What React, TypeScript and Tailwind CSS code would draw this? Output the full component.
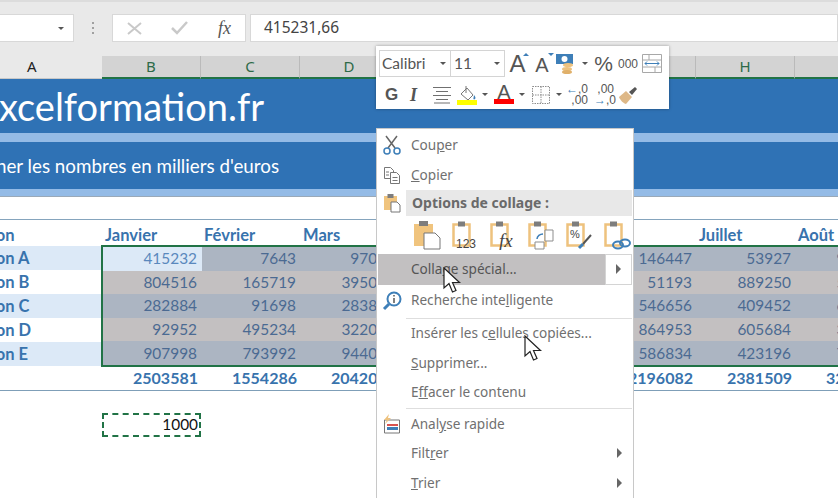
import type { ReactNode } from "react";

const COLS = ["B", "C", "D", "E", "F", "G", "H", "I"];

// the values under the context menu (E, F) are not visible, left blank
const ROWS = [
  { label: "Région A", values: ["415232", "7643", "97012", "", "", "146447", "53927", "915230"] },
  { label: "Région B", values: ["804516", "165719", "395044", "", "", "51193", "889250", "512044"] },
  { label: "Région C", values: ["282884", "91698", "283871", "", "", "546656", "409452", "603118"] },
  { label: "Région D", values: ["92952", "495234", "322066", "", "", "864953", "605684", "320771"] },
  { label: "Région E", values: ["907998", "793992", "944012", "", "", "586834", "423196", "781206"] },
];
const TOTALS = ["2503581", "1554286", "2042005", "", "", "2196082", "2381509", "3241669"];
const HEADERS = ["Janvier", "Février", "Mars", "", "", "", "Juillet", "Août"];

function Caret({ className = "" }: { className?: string }) {
  return <span className={`inline-block w-0 h-0 border-x-[3px] border-x-transparent border-t-[3px] border-t-[#555] ${className}`} />;
}

function Arrow() {
  return <span className="w-0 h-0 border-y-[5px] border-y-transparent border-l-[5px] border-l-[#666]" />;
}

function Clip({ children }: { children?: ReactNode }) {
  return (
    <svg width="28" height="30" viewBox="0 0 28 30" className="shrink-0">
      <path d="M2.500 4.500h16v21h-16z" fill="none" stroke="#eec27e" strokeWidth="2.500" />
      <path d="M7 1.500h7v5H7z" fill="#7d7d7d" />
      {children}
    </svg>
  );
}

function Mouse({ className }: { className: string }) {
  return (
    <svg width="20" height="27" viewBox="0 0 20 27" className={`absolute ${className}`}>
      <path d="M1 1v20l5-4.500 3.500 8.500 3.500-1.500-3.500-8h7z" fill="#fff" stroke="#222" strokeWidth="1.200" />
    </svg>
  );
}

function Item({ icon, children, arrow, h = "h-[29.5px]" }: { icon?: ReactNode; children: ReactNode; arrow?: boolean; h?: string }) {
  return (
    <div className={`flex items-center ${h}`}>
      <div className="w-[29px] shrink-0 flex justify-center items-center">{icon}</div>
      <div className="pl-[5px] flex-1">{children}</div>
      {arrow && <div className="w-[27px] flex justify-center"><Arrow /></div>}
    </div>
  );
}

function Sep() {
  return <div className="h-px bg-[#dedede] ml-[29px] mr-[1px] mt-[1px]" />;
}

function MiniToolbar() {
  return (
    <div className="absolute left-[376px] top-[46px] w-[293px] h-[63px] bg-white shadow-[0_0_3px_rgba(0,0,0,0.35)] px-[3px] pt-[4px] font-['Liberation_Sans',sans-serif] text-[#555]">
      <div className="flex items-center h-[27px]">
        <div className="w-[72px] h-[27px] border border-[#d4d4d4] flex items-center justify-between px-[2px] text-[15.500px] font-['Lato',sans-serif]">
          Calibri<Caret className="mr-[2px]" />
        </div>
        <div className="w-[54px] h-[27px] border border-[#d4d4d4] border-l-0 flex items-center justify-between pl-[3px] pr-[2px] text-[15.500px] font-['Lato',sans-serif]">
          11<Caret className="mr-[2px]" />
        </div>
        <div className="relative w-[25px] text-[24px] leading-none text-center">
          A<span className="absolute right-[1px] top-[1px] w-0 h-0 border-x-[3px] border-x-transparent border-b-[3px] border-b-[#3e7fb8]" />
        </div>
        <div className="relative w-[24px] text-[20px] leading-none text-center pt-[3px]">
          A<span className="absolute right-[0px] top-[1px] w-0 h-0 border-x-[3px] border-x-transparent border-t-[3px] border-t-[#3e7fb8]" />
        </div>
        <svg width="21" height="21" viewBox="0 0 21 21" className="ml-[1px]">
          <rect x="1" y="1" width="17" height="10" fill="#3e7fb8" />
          <circle cx="9.500" cy="6" r="3" fill="#fff" />
          <ellipse cx="13" cy="12" rx="5" ry="2" fill="#eec27e" />
          <ellipse cx="12" cy="16" rx="5" ry="2" fill="#eec27e" />
          <ellipse cx="12" cy="19" rx="5" ry="2" fill="#e0b06a" />
        </svg>
        <Caret className="ml-[6px]" />
        <div className="w-[21px] ml-[5px] text-[21px] leading-none text-center">%</div>
        <div className="w-[20px] ml-[4px] text-[12px] text-center">000</div>
        <svg width="20" height="19" viewBox="0 0 20 19" className="ml-[4px]">
          <path d="M.5.5h19v18H.5zM.5 6h19M.5 13h19M7 .5V6M13 13v5.500" fill="none" stroke="#a8a8a8" />
          <path d="M3 9.500h14M3 9.500l2-2M3 9.500l2 2M17 9.500l-2-2M17 9.500l-2 2" fill="none" stroke="#3e7fb8" />
        </svg>
      </div>
      <div className="flex items-center h-[29px] mt-[3px]">
        <div className="w-[14px] ml-[6px] text-[17px] font-bold leading-none">G</div>
        <div className="w-[12px] ml-[11px] text-[18px] font-bold italic leading-none font-['Liberation_Serif',serif]">I</div>
        <svg width="18" height="18" viewBox="0 0 18 18" className="ml-[11px]">
          <path d="M0 1.500h18M3 5.500h12M0 9.500h18M3 13.500h12M1 17h16" stroke="#707070" />
        </svg>
        <svg width="20" height="20" viewBox="0 0 20 20" className="ml-[6px]">
          <path d="M4 9l6-6 6 7-5 5z" fill="#fff" stroke="#777" />
          <path d="M9 1v7" stroke="#777" />
          <path d="M17 10c1.500 2 2 3 1 4s-2 0-1.500-1z" fill="#3e7fb8" />
          <rect x="0" y="15" width="20" height="5" fill="#ffff00" />
        </svg>
        <Caret className="ml-[5px]" />
        <div className="w-[20px] ml-[6px] flex flex-col items-center">
          <span className="text-[20px] leading-[15px] h-[14px]">A</span>
          <span className="w-[20px] h-[5px] bg-[#ff0000]" />
        </div>
        <Caret className="ml-[5px]" />
        <svg width="18" height="18" viewBox="0 0 18 18" className="ml-[7px]">
          <path d="M.5.5h17v17H.5zM9 .5v17M.5 9h17" fill="none" stroke="#8d8d8d" strokeDasharray="1.500 1" />
        </svg>
        <Caret className="ml-[6px]" />
        <div className="w-[22px] ml-[4px] text-[12px] leading-[11px] text-right">
          <div><span className="text-[#3e7fb8] font-bold">←</span>,0</div>
          <div>,00</div>
        </div>
        <div className="w-[20px] ml-[6px] text-[12px] leading-[11px] text-right">
          <div>,00</div>
          <div><span className="text-[#3e7fb8] font-bold">→</span>,0</div>
        </div>
        <svg width="20" height="20" viewBox="0 0 20 20" className="ml-[4px]">
          <path d="M1 12l7-6 6 6-6 7c-2 0-6-4-7-7z" fill="#deb887" />
          <path d="M11 7l6-5 2 2-5 6z" fill="#555" />
        </svg>
      </div>
    </div>
  );
}

function ContextMenu() {
  return (
    <div className="absolute left-[376px] top-[128px] w-[258px] h-[372px] bg-white border border-[#c8c8c8] pt-[1px] font-['Noto_Sans',sans-serif] text-[13.600px] text-[#707070]">
      <Item
        h="h-[30px]"
        icon={
          <svg width="18" height="20" viewBox="0 0 18 20">
            <path d="M3 1l9 12M14 1L5 13" stroke="#666" strokeWidth="1.500" />
            <circle cx="4" cy="16" r="3" fill="none" stroke="#3e7fb8" strokeWidth="1.500" />
            <circle cx="14" cy="16" r="3" fill="none" stroke="#3e7fb8" strokeWidth="1.500" />
          </svg>
        }
      >
        Cou<u>p</u>er
      </Item>
      <Item
        icon={
          <svg width="18" height="18" viewBox="0 0 18 18">
            <path d="M1.500 1.500h6l3 3v8h-9z" fill="#fff" stroke="#777" />
            <path d="M7.500 6.500h6l3 3v8h-9z" fill="#fff" stroke="#777" />
            <path d="M9.500 11.500h5M9.500 14.500h5M3 6h3M3 9h3" stroke="#777" />
          </svg>
        }
      >
        <u>C</u>opier
      </Item>
      <div className="flex h-[26px]">
        <div className="w-[29px] flex justify-center items-center">
          <svg width="18" height="20" viewBox="0 0 18 20">
            <path d="M1 3h13v14H1z" fill="#f0c47e" />
            <path d="M4.500 1h6v4h-6z" fill="#7d7d7d" />
            <path d="M8 9h6l3 3v7H8z" fill="#fff" stroke="#777" />
          </svg>
        </div>
        <div className="flex-1 bg-[#e8e8e8] mr-[1px] flex items-center pl-[6px] font-bold text-[#6a6a6a] text-[14px]">Options de collage :</div>
      </div>
      <div className="flex items-center h-[38px] pl-[36px] gap-[10px]">
        <svg width="28" height="30" viewBox="0 0 28 30" className="shrink-0">
          <path d="M1 4h19v22H1z" fill="#f0c47e" />
          <path d="M6 1h9v5H6z" fill="#7d7d7d" />
          <path d="M11 13h11l5 5v11H11z" fill="#fff" stroke="#777" />
        </svg>
        <Clip><text x="5" y="28" fontSize="12" fontFamily="Liberation Sans" fill="#444">123</text></Clip>
        <Clip><text x="10" y="27" fontSize="19" fontStyle="italic" fontFamily="Liberation Serif" fill="#444">fx</text></Clip>
        <Clip>
          <path d="M8 22h9v7H8zM18 10h8v11h-8z" fill="#fff" stroke="#8d8d8d" />
          <path d="M10 19c0-3 3-5 6-5" fill="none" stroke="#3e7fb8" strokeWidth="1.500" />
        </Clip>
        <Clip>
          <text x="5" y="18" fontSize="11" fontFamily="Liberation Sans" fill="#444">%</text>
          <path d="M14 28l4-4" stroke="#3e7fb8" strokeWidth="3" />
          <path d="M18 24l8-9" stroke="#555" strokeWidth="2" />
        </Clip>
        <Clip>
          <ellipse cx="15" cy="25" rx="5" ry="3.500" fill="none" stroke="#3e7fb8" strokeWidth="2" />
          <ellipse cx="22" cy="23" rx="5" ry="3.500" fill="none" stroke="#3e7fb8" strokeWidth="2" />
        </Clip>
      </div>
      <div className="flex h-[31px] ml-[1px] mr-[1px]">
        <div className="flex-1 bg-[#c2c0c1] flex items-center pl-[33px] text-[#555]">Colla<u>g</u>e spécial...</div>
        <div className="w-[27px] border border-[#d4d4d4] flex justify-center items-center"><Arrow /></div>
      </div>
      <Item
        h="h-[32px]"
        icon={
          <svg width="20" height="20" viewBox="0 0 20 20">
            <circle cx="12" cy="8" r="6.500" fill="#fff" stroke="#3e7fb8" strokeWidth="2" />
            <path d="M7 13l-5 5" stroke="#3e7fb8" strokeWidth="3" />
            <path d="M12 7v5M12 4v1.500" stroke="#555" strokeWidth="1.500" />
          </svg>
        }
      >
        Recherche inte<u>l</u>ligente
      </Item>
      <Sep />
      <Item>Insérer les c<u>e</u>llules copiées...</Item>
      <Item><u>S</u>upprimer...</Item>
      <Item>E<u>f</u>facer le contenu</Item>
      <Sep />
      <Item
        icon={
          <svg width="18" height="20" viewBox="0 0 18 20">
            <path d="M1.500 6h15v13h-15z" fill="#fff" stroke="#777" />
            <path d="M4 10h11v2H4z" fill="#d9534f" />
            <path d="M4 13h11v3H4z" fill="#3e7fb8" />
            <path d="M6 0L1 6h3L2 10l6-6H5z" fill="#eec27e" />
          </svg>
        }
      >
        Anal<u>y</u>se rapide
      </Item>
      <Item arrow>Filt<u>r</u>er</Item>
      <Item arrow><u>T</u>rier</Item>
      <Sep />
    </div>
  );
}

export default function App() {
  return (
    <div className="relative w-[838px] h-[498px] overflow-hidden bg-white font-['Lato',sans-serif]">
      {/* formula bar */}
      <div className="flex h-[56px] pt-[12px] bg-[#e9e9e9] border-t-2 border-t-[#dcdcdc]">
        <div className="w-[74px] h-[28px] bg-white border border-[#d8d8d8] border-l-0 flex items-center justify-end pr-[9px]">
          <Caret />
        </div>
        <div className="w-[38px] h-[28px] flex flex-col items-center justify-center gap-[3px]">
          <span className="w-[2px] h-[2px] bg-[#a0a0a0]" />
          <span className="w-[2px] h-[2px] bg-[#a0a0a0]" />
          <span className="w-[2px] h-[2px] bg-[#a0a0a0]" />
        </div>
        <div className="w-[134px] h-[28px] bg-white border border-[#d8d8d8] flex items-center pl-[14px]">
          <svg width="15" height="13" viewBox="0 0 15 13"><path d="M1 1l13 11M14 1L1 12" stroke="#c9c9c9" strokeWidth="2" /></svg>
          <svg width="17" height="14" viewBox="0 0 17 14" className="ml-[29px]"><path d="M1 7l5 5L16 1" fill="none" stroke="#c9c9c9" strokeWidth="2.500" /></svg>
          <span className="ml-[30px] text-[18px] leading-none italic font-['Liberation_Serif',serif] text-[#555]">fx</span>
        </div>
        <div className="flex-1 h-[28px] ml-[4px] bg-white border border-[#d8d8d8] flex items-center pl-[13px] font-['Noto_Sans',sans-serif] text-[15.500px] text-[#444]">
          415231,66
        </div>
      </div>

      {/* column headers */}
      <div className="flex h-[23px] text-[15px] leading-[21px]">
        <div className="w-[102px] shrink-0 bg-[#e9e9e9] pl-[27px] text-[#222] font-['Noto_Sans',sans-serif] border-b border-b-[#c8c8c8]">A</div>
        {COLS.map((c) => (
          <div key={c} className="w-[99px] shrink-0 bg-[#d3d3d3] border-r border-r-[#bababa] border-b-2 border-b-[#217346] text-center text-[#2d6a48] font-['Noto_Sans',sans-serif]">
            {c}
          </div>
        ))}
      </div>

      {/* title banner */}
      <div className="h-[54px] bg-[#2f72b5] flex items-center text-white text-[38px] leading-none whitespace-nowrap">
        <span className="-ml-[23px]">Excelformation.fr</span>
      </div>
      <div className="h-[9px] bg-[#94bbe6]" />
      <div className="h-[47px] pt-[2px] bg-[#2f72b5] flex items-center text-white text-[18.800px] whitespace-nowrap">
        <span className="-ml-[42px]">Afficher les nombres en milliers d'euros</span>
      </div>
      <div className="h-[8px] bg-[#94bbe6] border-b border-b-[#9aa9b8]" />
      <div className="h-[22px]" />

      {/* table */}
      <div className="text-[16.500px] whitespace-nowrap">
        <div className="flex h-[26px] pt-[5px] border-t border-t-[#85a4bd] items-center font-bold text-[#3873ad]">
          <div className="w-[102px] shrink-0 overflow-hidden"><span className="inline-block -ml-[36px]">Région</span></div>
          {HEADERS.map((h, i) => (
            <div key={i} className="w-[99px] shrink-0 pl-[3px]">{h}</div>
          ))}
        </div>
        <div className="flex">
          <div className="w-[102px] shrink-0 pt-[1px]">
            {ROWS.map((r, i) => (
              <div key={r.label} className={`h-[24px] flex items-center font-bold text-[#3873ad] overflow-hidden ${i % 2 === 0 ? "bg-[#dce9f7]" : "bg-white"}`}>
                <span className="-ml-[36px]">{r.label}</span>
              </div>
            ))}
          </div>
          <div className="border-y-2 border-l-2 border-[#217346] -ml-[1px] text-[15.400px]">
            {ROWS.map((r, i) => (
              <div key={r.label} className={`flex h-[23.600px] items-center ${i % 2 === 0 ? "bg-[#acb5c2]" : "bg-[#c3c0c1]"} text-[#4b6a92]`}>
                {r.values.map((v, j) => (
                  <div
                    key={j}
                    className={`w-[99px] h-full shrink-0 flex items-center justify-end pr-[5px] ${i === 0 && j === 0 ? "bg-[#dce9f7] text-[#5a88bd]" : ""}`}
                  >
                    {v}
                  </div>
                ))}
              </div>
            ))}
          </div>
        </div>
        <div className="flex h-[24px] items-center border-b border-b-[#7f9fb8] font-bold text-[#3873ad] text-[16px]">
          <div className="w-[102px] shrink-0" />
          {TOTALS.map((v, i) => (
            <div key={i} className="w-[99px] shrink-0 text-right pr-[3px]">{v}</div>
          ))}
        </div>
        <div className="flex mt-[22px] text-[15.400px]">
          <div className="w-[102px] shrink-0" />
          <div className="w-[99px] h-[24px] border-2 border-dashed border-[#217346] flex items-center justify-end pr-[1px] text-[#111]">1000</div>
        </div>
      </div>

      <MiniToolbar />
      <ContextMenu />
      <Mouse className="left-[443px] top-[267px]" />
      <Mouse className="left-[524px] top-[335px]" />
    </div>
  );
}
